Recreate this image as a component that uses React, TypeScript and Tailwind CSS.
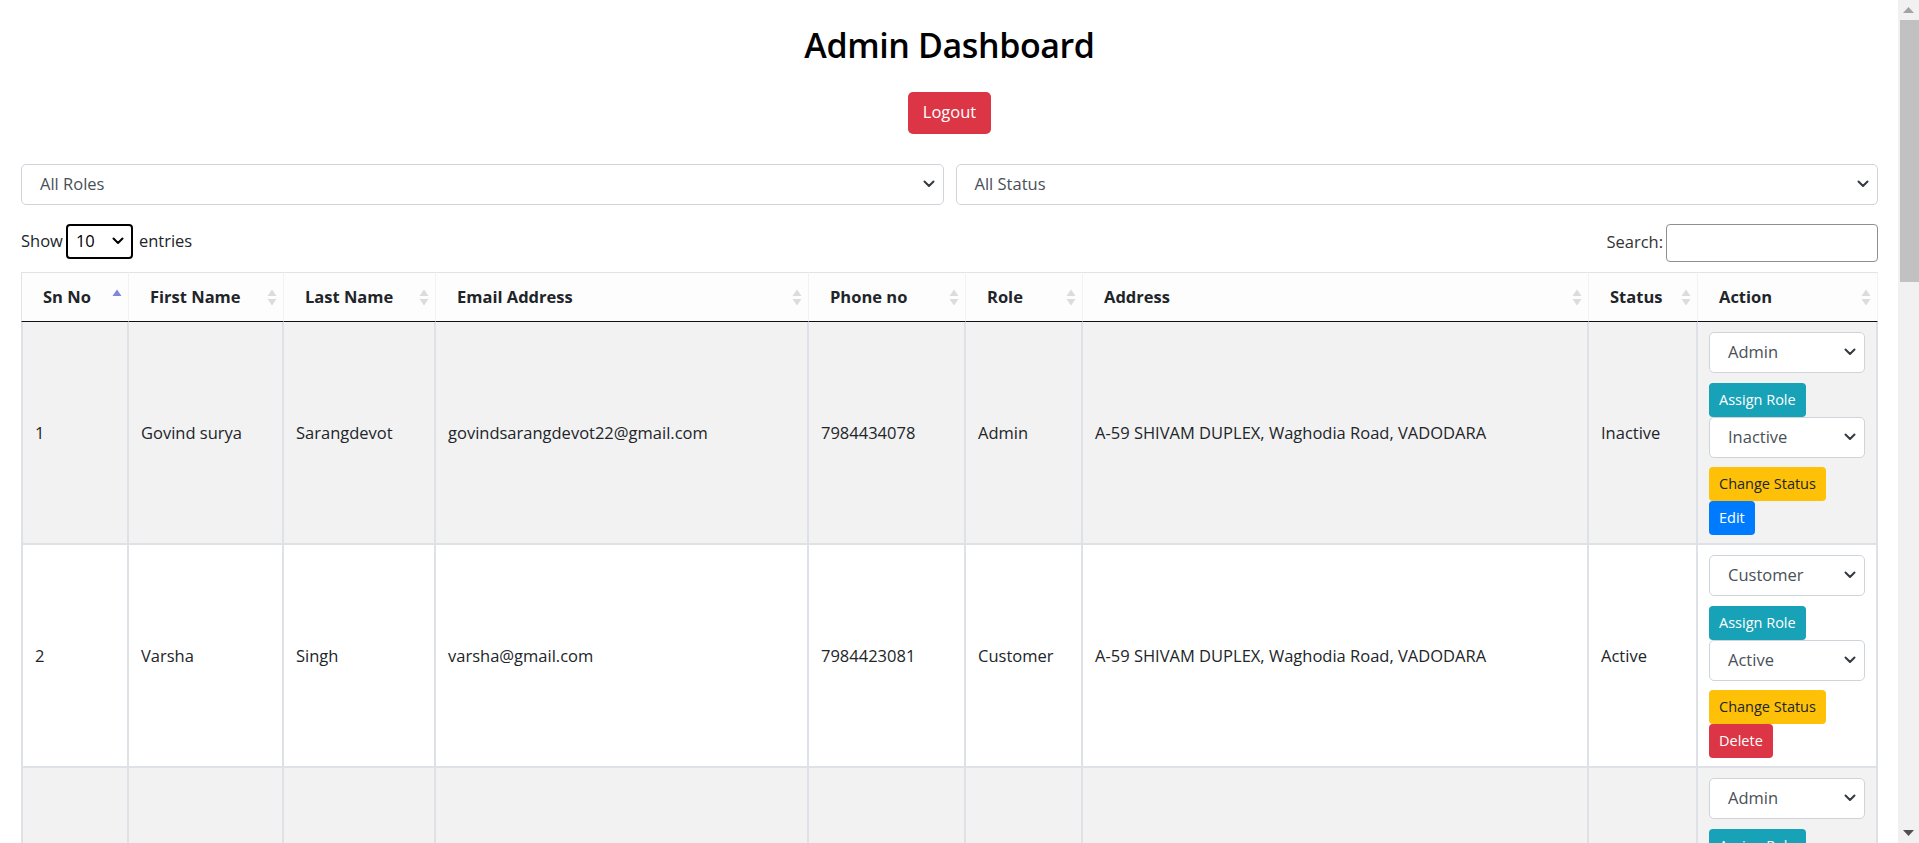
import React from "react";

type User = {
  first: string;
  last: string;
  email: string;
  phone: string;
  role: string;
  address: string;
  status: string;
};

const ADDR = "A-59 SHIVAM DUPLEX, Waghodia Road, VADODARA";

const users: User[] = [
  { first: "Govind surya", last: "Sarangdevot", email: "govindsarangdevot22@gmail.com", phone: "7984434078", role: "Admin", address: ADDR, status: "Inactive" },
  { first: "Varsha", last: "Singh", email: "varsha@gmail.com", phone: "7984423081", role: "Customer", address: ADDR, status: "Active" },
  { first: "Rahul", last: "Patel", email: "rahulpatel@gmail.com", phone: "9825012345", role: "Admin", address: ADDR, status: "Active" },
  { first: "Kiran", last: "Shah", email: "kiranshah@gmail.com", phone: "9898765432", role: "Customer", address: ADDR, status: "Active" },
  { first: "Neha", last: "Joshi", email: "neha.joshi@gmail.com", phone: "9712345678", role: "Customer", address: ADDR, status: "Inactive" },
  { first: "Amit", last: "Desai", email: "amitdesai@gmail.com", phone: "9426011223", role: "Customer", address: ADDR, status: "Active" },
  { first: "Pooja", last: "Mehta", email: "poojamehta@gmail.com", phone: "9824455667", role: "Customer", address: ADDR, status: "Active" },
  { first: "Ravi", last: "Trivedi", email: "ravitrivedi@gmail.com", phone: "9909123456", role: "Customer", address: ADDR, status: "Active" },
  { first: "Sneha", last: "Rana", email: "sneharana@gmail.com", phone: "9638527410", role: "Customer", address: ADDR, status: "Inactive" },
  { first: "Harsh", last: "Parmar", email: "harshparmar@gmail.com", phone: "9512345670", role: "Customer", address: ADDR, status: "Active" },
];

const columns = [
  { label: "Sn No", w: "w-[108px]" },
  { label: "First Name", w: "w-[155px]" },
  { label: "Last Name", w: "w-[152px]" },
  { label: "Email Address", w: "w-[373px]" },
  { label: "Phone no", w: "w-[157px]" },
  { label: "Role", w: "w-[117px]" },
  { label: "Address", w: "w-[506px]" },
  { label: "Status", w: "w-[109px]" },
  { label: "Action", w: "w-[180px]" },
];

function Chevron({ color = "#343a40" }: { color?: string }) {
  return (
    <svg width="12" height="8" viewBox="0 0 12 8" fill="none" className="pointer-events-none absolute right-[9px] top-1/2 -translate-y-1/2">
      <path d="M1.5 1.5 6 6l4.5-4.5" stroke={color} strokeWidth="2" strokeLinecap="round" strokeLinejoin="round" />
    </svg>
  );
}

function SortIcon({ active }: { active?: boolean }) {
  return (
    <svg width="10" height="18" viewBox="0 0 10 18" className="shrink-0">
      <polygon points="0.5,7 5,0.5 9.5,7" fill={active ? "#7f86dc" : "#dcdcdc"} />
      {!active && <polygon points="0.5,10 9.5,10 5,16.5" fill="#dcdcdc" />}
    </svg>
  );
}

function FormSelect({ value, className }: { value: string; className?: string }) {
  return (
    <div className={`relative ${className ?? ""}`}>
      <div className="flex h-[41px] items-center rounded-[5px] border border-[#ced4da] bg-white pl-[18px] text-[16.5px] text-[#495057]">
        {value}
      </div>
      <Chevron />
    </div>
  );
}

function Btn({ label, color }: { label: string; color: string }) {
  return (
    <button className={`block h-[34px] rounded-[4px] px-[10px] text-[14.5px] leading-none ${color}`}>{label}</button>
  );
}

function Scrollbar() {
  return (
    <div className="flex h-screen w-[21px] shrink-0 flex-col bg-[#f1f1f1]">
      <div className="flex h-[20px] items-center justify-center">
        <svg width="11" height="6" viewBox="0 0 11 6">
          <polygon points="0,6 5.5,0 11,6" fill="#a3a3a3" />
        </svg>
      </div>
      <div className="ml-[2px] h-[262px] bg-[#c1c1c1]" />
      <div className="flex-1" />
      <div className="flex h-[20px] items-center justify-center">
        <svg width="11" height="6" viewBox="0 0 11 6">
          <polygon points="0,0 11,0 5.5,6" fill="#505050" />
        </svg>
      </div>
    </div>
  );
}

export default function App() {
  return (
    <div className="flex h-screen overflow-hidden bg-white text-[#212529]" style={{ fontFamily: '"Open Sans", "Noto Sans", sans-serif' }}>
      <div className="min-w-0 flex-1 overflow-hidden pl-[21px] pr-[20px]">
        <h1 className="mt-[25px] text-center text-[34px] font-semibold leading-[1.2] tracking-[-0.4px] text-black">Admin Dashboard</h1>

        <div className="mt-[26px] flex justify-center">
          <button className="h-[42px] rounded-[5px] bg-[#dc3545] px-[15px] text-[16.5px] text-white">Logout</button>
        </div>

        <div className="mt-[30px] flex gap-[12px]">
          <FormSelect value="All Roles" className="flex-1" />
          <FormSelect value="All Status" className="flex-1" />
        </div>

        <div className="mt-[19px] flex items-start justify-between">
          <div className="flex h-[35px] items-center gap-[3px] text-[16.5px]">
            <span>Show</span>
            <div className="relative">
              <div className="flex h-[35px] w-[67px] items-center rounded-[4px] border-2 border-black pl-[8px] text-[16.5px] text-black">10</div>
              <Chevron color="#000" />
            </div>
            <span className="ml-[3px]">entries</span>
          </div>
          <div className="flex items-center gap-[3px] text-[16.5px]">
            <span className="text-[#333]">Search:</span>
            <div className="h-[38px] w-[212px] rounded-[4px] border border-[#8f8f8f] bg-white" />
          </div>
        </div>

        <table className="mt-[10px] w-[1857px] table-fixed border-separate border-spacing-0">
          <colgroup>
            {columns.map((c) => (
              <col key={c.label} className={c.w} />
            ))}
          </colgroup>
          <thead>
            <tr>
              {columns.map((c, i) => (
                <th
                  key={c.label}
                  className={`h-[50px] border-t border-b border-r border-t-[#e3e3e3] border-b-[#111] border-r-[#f2f2f2] bg-[#fdfdfd] p-0 pt-[2px] text-left text-[16.5px] font-bold ${i === 0 ? "border-l border-l-[#e3e3e3]" : ""} ${i === columns.length - 1 ? "border-r-[#e3e3e3]" : ""}`}
                >
                  <div className="flex items-center justify-between pl-[21px] pr-[6px]">
                    <span>{c.label}</span>
                    <SortIcon active={i === 0} />
                  </div>
                </th>
              ))}
            </tr>
          </thead>
          <tbody>
            {users.map((u, idx) => (
              <tr key={idx} className={idx % 2 === 0 ? "bg-[#f2f2f2]" : "bg-white"}>
                {[String(idx + 1), u.first, u.last, u.email, u.phone, u.role, u.address, u.status].map((v, ci) => (
                  <td
                    key={ci}
                    className={`border-b-2 border-r-2 border-[#dee2e6] px-[12px] pt-[2px] align-middle text-[16.5px] ${ci === 0 ? "border-l-2" : ""}`}
                  >
                    {v}
                  </td>
                ))}
                <td className="border-b-2 border-r-2 border-[#dee2e6] px-[11px] pt-[10px] pb-[8px] align-top">
                  <FormSelect value={u.role} />
                  <div className="mt-[10px]">
                    <Btn label="Assign Role" color="bg-[#17a2b8] text-white" />
                  </div>
                  <FormSelect value={u.status} />
                  <div className="mt-[9px]">
                    <Btn label="Change Status" color="bg-[#ffc107] text-[#212529]" />
                    {idx === 0 ? (
                      <Btn label="Edit" color="bg-[#007bff] text-white" />
                    ) : (
                      <Btn label="Delete" color="bg-[#dc3545] text-white" />
                    )}
                  </div>
                </td>
              </tr>
            ))}
          </tbody>
        </table>

        <div className="mt-[12px] flex items-center justify-between text-[16.5px]">
          <span>Showing 1 to 10 of 12 entries</span>
          <div className="flex items-center gap-[6px]">
            <span className="px-[12px] py-[6px] text-[#999]">Previous</span>
            <span className="rounded-[2px] border border-[#cacaca] bg-[#f3f3f3] px-[12px] py-[5px]">1</span>
            <span className="px-[12px] py-[6px]">2</span>
            <span className="px-[12px] py-[6px]">Next</span>
          </div>
        </div>
      </div>
      <Scrollbar />
    </div>
  );
}
